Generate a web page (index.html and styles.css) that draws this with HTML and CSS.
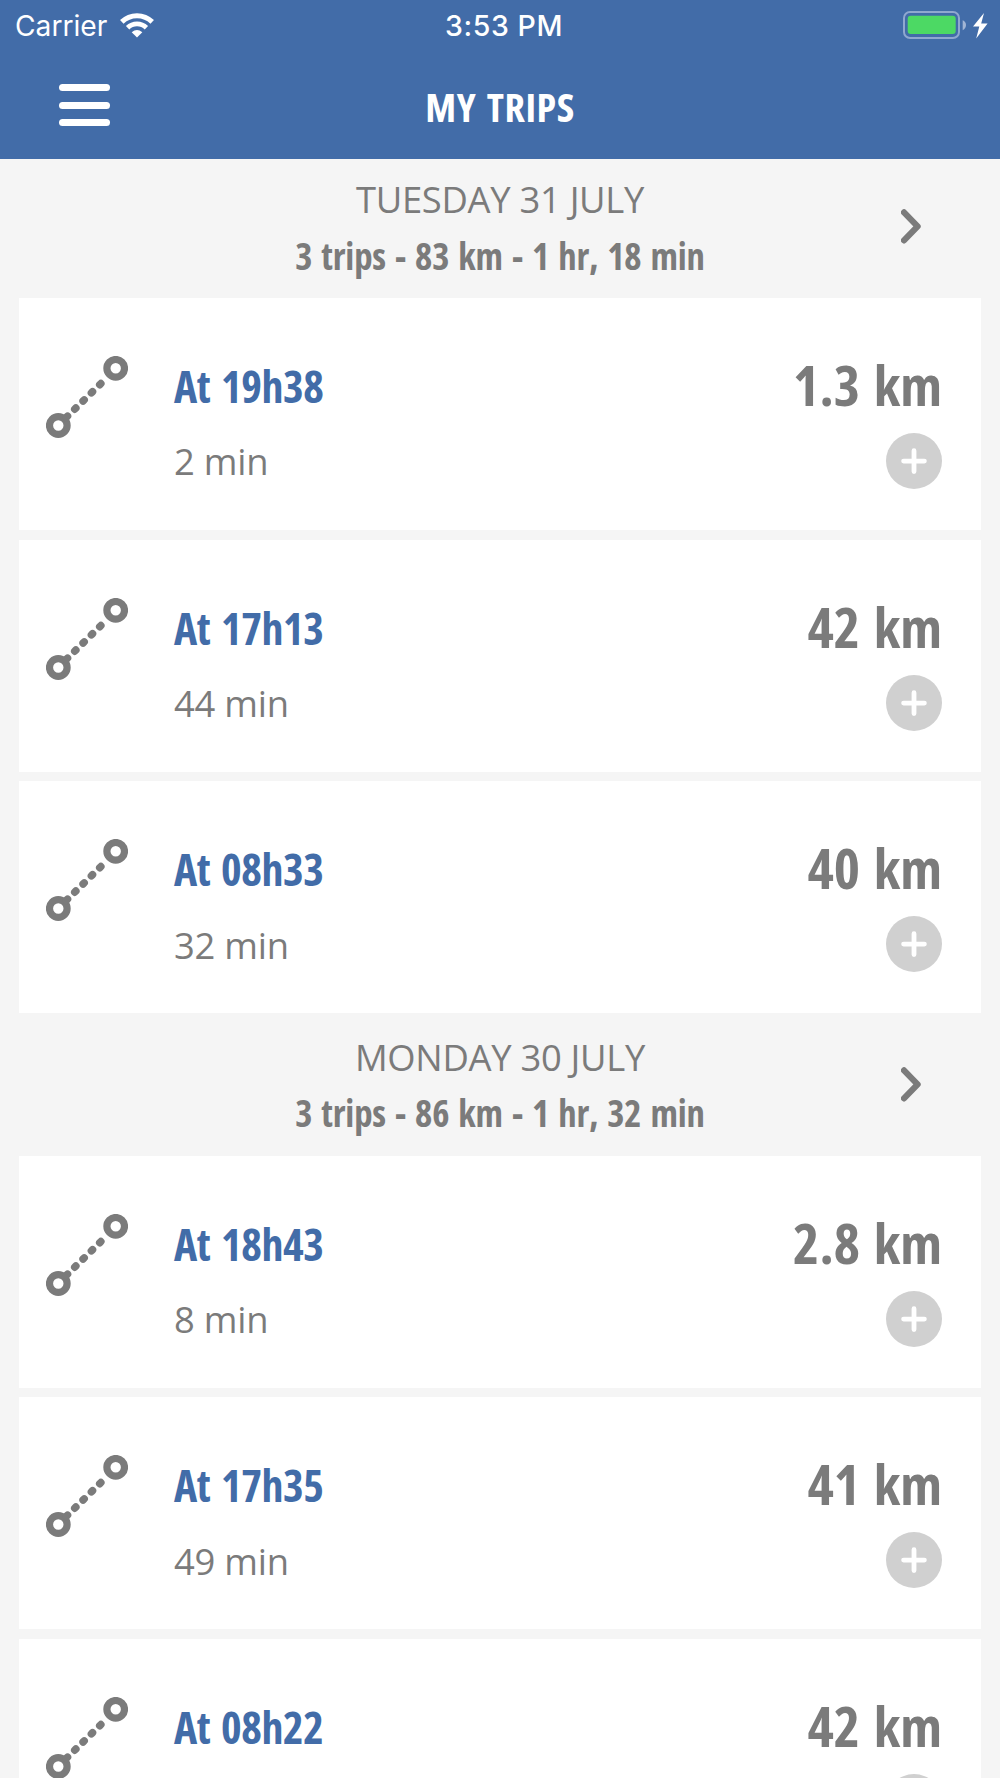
FILE: index.html
```
<!DOCTYPE html>
<html lang="en">
<head>
    <meta charset="utf-8"/>
    <title>My Trips</title>
    <link rel="stylesheet" href="styles.css">
</head>
<body>
    <svg class="sprite" width="0" height="0">
        <symbol id="route" viewBox="0 0 82 82">
            <circle cx="69.7" cy="12.3" r="8.8" fill="none" stroke="#7b7b7b" stroke-width="7.2"/>
            <circle cx="12.3" cy="69.5" r="8.8" fill="none" stroke="#7b7b7b" stroke-width="7.2"/>
            <path d="M20.4 61.3L62 20.6" fill="none" stroke="#7b7b7b" stroke-width="7.5" stroke-linecap="round" stroke-dasharray="1.6 10.05"/>
        </symbol>
        <symbol id="chevron" viewBox="0 0 20 36">
            <path d="M3 3.4L16.6 17.4L3 31.4" fill="none" stroke="#7b7b7b" stroke-width="6.2" stroke-linecap="round" stroke-linejoin="round"/>
        </symbol>
        <symbol id="plus" viewBox="0 0 56 56">
            <circle cx="28" cy="28" r="28" fill="#d0d0d0"/>
            <path d="M28 17.7v20.8M17.6 28.1h20.8" fill="none" stroke="#ffffff" stroke-width="4.8" stroke-linecap="round"/>
        </symbol>
    </svg>
    <div class="header">
        <div class="status-bar">
            <div class="carrier">
                <span>Carrier</span>
                <svg width="34" height="25" viewBox="0 0 34 25">
                    <path d="M1.8 8.9A21.6 21.6 0 0 1 32.2 8.9" fill="none" stroke="#fff" stroke-width="5"/>
                    <path d="M7.6 14.8A13.4 13.4 0 0 1 26.4 14.8" fill="none" stroke="#fff" stroke-width="4.8"/>
                    <path d="M17 24.6L11.7 19.2Q17 14.8 22.3 19.2Z" fill="#fff"/>
                </svg>
            </div>
            <span class="clock">3:53 PM</span>
            <svg class="battery" width="86" height="28" viewBox="0 0 86 28">
                <rect x="1" y="1" width="55" height="26" rx="6" fill="none" stroke="#8fa8cf" stroke-width="2"/>
                <rect x="4.7" y="4.7" width="48" height="18.3" rx="3" fill="#4cd964"/>
                <path d="M59.7 9.2Q63 10.6 63 14T59.7 19.2Z" fill="#a1b5d5"/>
                <path d="M81 2L70 15.6H76.3L73.2 27.4L84.6 12.4H78.2Z" fill="#fff"/>
            </svg>
        </div>
        <div class="nav">
            <div class="menu-btn"><i></i><i></i><i></i></div>
            <h1>MY TRIPS</h1>
        </div>
    </div>
    <div class="trips">
        <div class="day">
            <div class="date">TUESDAY 31 JULY</div>
            <div class="summary">3 trips - 83 km - 1 hr, 18 min</div>
            <svg class="chevron"><use href="#chevron"/></svg>
        </div>
        <div class="trip">
            <svg class="route"><use href="#route"/></svg>
            <div class="info">
                <div class="time">At 19h38</div>
                <div class="duration">2 min</div>
            </div>
            <div class="side">
                <div class="distance">1.3 km</div>
                <svg class="plus"><use href="#plus"/></svg>
            </div>
        </div>
        <div class="trip">
            <svg class="route"><use href="#route"/></svg>
            <div class="info">
                <div class="time">At 17h13</div>
                <div class="duration">44 min</div>
            </div>
            <div class="side">
                <div class="distance">42 km</div>
                <svg class="plus"><use href="#plus"/></svg>
            </div>
        </div>
        <div class="trip">
            <svg class="route"><use href="#route"/></svg>
            <div class="info">
                <div class="time">At 08h33</div>
                <div class="duration">32 min</div>
            </div>
            <div class="side">
                <div class="distance">40 km</div>
                <svg class="plus"><use href="#plus"/></svg>
            </div>
        </div>
        <div class="day">
            <div class="date">MONDAY 30 JULY</div>
            <div class="summary">3 trips - 86 km - 1 hr, 32 min</div>
            <svg class="chevron"><use href="#chevron"/></svg>
        </div>
        <div class="trip">
            <svg class="route"><use href="#route"/></svg>
            <div class="info">
                <div class="time">At 18h43</div>
                <div class="duration">8 min</div>
            </div>
            <div class="side">
                <div class="distance">2.8 km</div>
                <svg class="plus"><use href="#plus"/></svg>
            </div>
        </div>
        <div class="trip">
            <svg class="route"><use href="#route"/></svg>
            <div class="info">
                <div class="time">At 17h35</div>
                <div class="duration">49 min</div>
            </div>
            <div class="side">
                <div class="distance">41 km</div>
                <svg class="plus"><use href="#plus"/></svg>
            </div>
        </div>
        <div class="trip">
            <svg class="route"><use href="#route"/></svg>
            <div class="info">
                <div class="time">At 08h22</div>
            </div>
            <div class="side">
                <div class="distance">42 km</div>
                <svg class="plus"><use href="#plus"/></svg>
            </div>
        </div>
    </div>
</body>
</html>
```
FILE: styles.css
```
html, body {
    margin: 0;
    padding: 0;
    height: 1778px;
    overflow: hidden;
    font-family: "Open Sans", sans-serif;
    background-color: #f5f5f5;
    color: #7b7b7b;
}
body {
    display: flex;
    flex-direction: column;
}
.sprite {
    display: block;
    flex-shrink: 0;
}
.header {
    height: 159.4px;
    flex-shrink: 0;
    background-color: #426ca8;
    color: #ffffff;
}
.status-bar {
    display: grid;
    grid-template-columns: 1fr auto 1fr;
    align-items: center;
    height: 51px;
    padding: 0 11px 0 15px;
    box-sizing: border-box;
    font-family: Inter, sans-serif;
    font-size: 28.5px;
}
.carrier {
    display: flex;
    align-items: center;
    gap: 13px;
    font-size: 28.2px;
}
.clock {
    margin-top: -1px;
    font-weight: 500;
    letter-spacing: 0.6px;
    padding-left: 4px;
}
.battery {
    justify-self: end;
    margin-top: -2px;
}
.nav {
    display: grid;
    grid-template-columns: 51px 1fr 51px;
    align-items: start;
    padding: 0 59px;
}
.menu-btn {
    display: flex;
    flex-direction: column;
    gap: 10.3px;
    margin-top: 33px;
}
.menu-btn i {
    height: 7.3px;
    border-radius: 4px;
    background-color: #ffffff;
}
.nav h1 {
    margin: 28px 0 0;
    font-size: 40px;
    line-height: 56px;
    font-weight: 700;
    font-stretch: 75%;
    letter-spacing: 0.5px;
    word-spacing: 3px;
    text-align: center;
}
.trips {
    padding: 6px 19.4px 0;
}
.day {
    position: relative;
    height: 132.7px;
    padding-top: 9px;
    box-sizing: border-box;
    text-align: center;
}
.date {
    font-size: 36.4px;
    line-height: 50px;
    letter-spacing: -0.3px;
}
.summary {
    margin-top: 6.4px;
    font-size: 36.8px;
    line-height: 50px;
    font-weight: 700;
    font-stretch: 75%;
    letter-spacing: -0.2px;
    word-spacing: 2.7px;
}
.chevron {
    position: absolute;
    width: 20px;
    height: 36px;
    right: 60px;
    top: 44px;
}
.trip {
    display: flex;
    height: 232px;
    margin-bottom: 9.6px;
    box-sizing: border-box;
    padding: 58px 38.5px 0 26.5px;
    background-color: #ffffff;
}
.route {
    width: 82px;
    height: 82px;
}
.info {
    flex: 1;
    padding-left: 46px;
}
.time {
    font-size: 44px;
    line-height: 60px;
    font-weight: 700;
    font-stretch: 75%;
    letter-spacing: -0.4px;
    word-spacing: 3.3px;
    color: #426ca8;
}
.duration {
    margin-top: 20.4px;
    font-size: 36.4px;
    line-height: 50px;
    letter-spacing: -0.2px;
}
.side {
    display: flex;
    flex-direction: column;
    align-items: flex-end;
}
.distance {
    margin-top: -2px;
    font-size: 56px;
    line-height: 60px;
    font-weight: 700;
    font-stretch: 75%;
    word-spacing: 3.8px;
}
.plus {
    width: 56px;
    height: 56px;
    margin-top: 19px;
}
```
